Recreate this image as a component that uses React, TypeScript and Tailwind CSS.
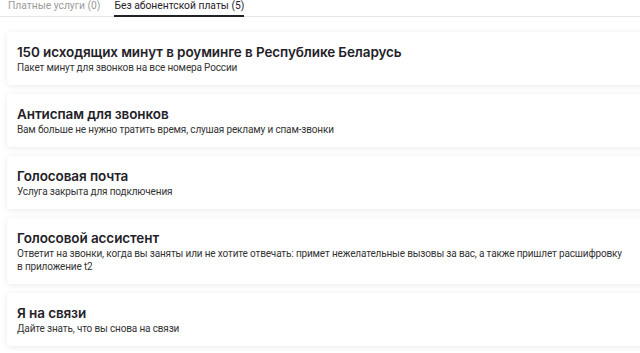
import React from "react";

const items = [
  { t: "150 исходящих минут в роуминге в Республике Беларусь", s: "Пакет минут для звонков на все номера России" },
  { t: "Антиспам для звонков", s: "Вам больше не нужно тратить время, слушая рекламу и спам-звонки" },
  { t: "Голосовая почта", s: "Услуга закрыта для подключения" },
  { t: "Голосовой ассистент", s: "Ответит на звонки, когда вы заняты или не хотите отвечать: примет нежелательные вызовы за вас, а также пришлет расшифровку в приложение t2" },
  { t: "Я на связи", s: "Дайте знать, что вы снова на связи" },
];

export default function App() {
  return (
    <div className="w-[640px] h-[353px] overflow-hidden bg-white" style={{ fontFamily: "Inter, 'Noto Sans', sans-serif" }}>
      <div className="flex gap-[14px] pl-[8px] border-b border-[#e6e6e6]">
        <div className="text-[10.3px] leading-[12px] text-[#9a9a9a] pb-[4px]" style={{ fontFamily: "Roboto, sans-serif" }}>Платные услуги (0)</div>
        <div className="text-[10.3px] leading-[12px] text-[#1f2229] pb-[3px] border-b-2 border-[#1f2229] -mb-px" style={{ fontFamily: "Roboto, sans-serif" }}>Без абонентской платы (5)</div>
      </div>
      <div className="flex flex-col gap-[9px] pl-[7px] pt-[15px]">
        {items.map((it, i) => (
          <div key={i} className="w-[660px] bg-white rounded-[4px] shadow-[0_1px_6px_rgba(0,0,0,0.09)] pl-[10px] pt-[12px] pb-[11px]">
            <div className="text-[13.5px] leading-[16px] font-semibold text-[#1f2229] tracking-[-0.1px]">{it.t}</div>
            <div className="text-[10px] leading-[13px] text-[#333] mt-[1px] w-[609px] tracking-[-0.15px]" style={{ fontFamily: "Roboto, sans-serif" }}>{it.s}</div>
          </div>
        ))}
      </div>
    </div>
  );
}
